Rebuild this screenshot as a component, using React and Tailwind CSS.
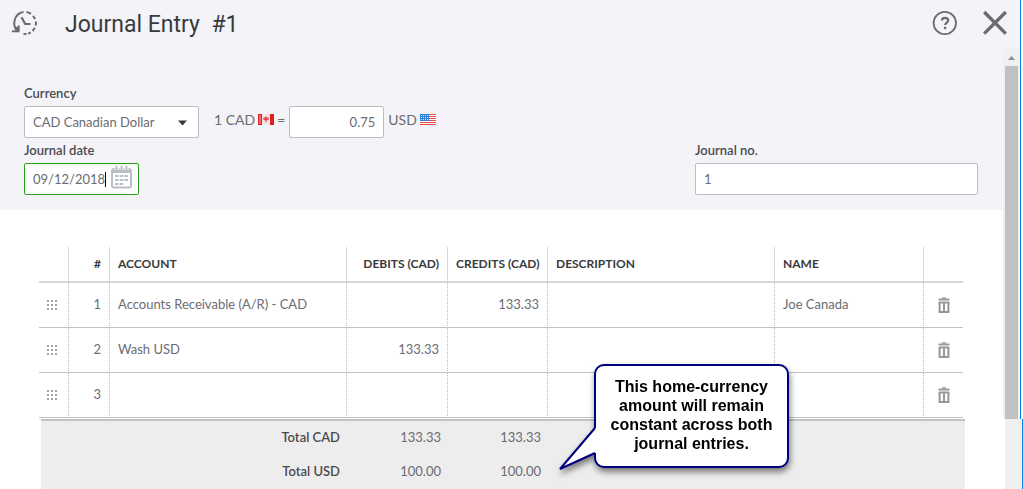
import React from "react";

const lines = [
  { id: 1, account: "Accounts Receivable (A/R) - CAD", debit: "", credit: "133.33", description: "", name: "Joe Canada" },
  { id: 2, account: "Wash USD", debit: "133.33", credit: "", description: "", name: "" },
  { id: 3, account: "", debit: "", credit: "", description: "", name: "" },
];

const totals = [
  { label: "Total CAD", debit: "133.33", credit: "133.33" },
  { label: "Total USD", debit: "100.00", credit: "100.00" },
];

function HistoryIcon() {
  return (
    <svg width="28" height="28" viewBox="0 0 28 28" fill="none" stroke="#6b6c72" strokeWidth="2">
      <path d="M12.5 3.1A11 11 0 0 0 7.5 22.6" />
      <path d="M1 22.2H7.6V16.5" />
      <path d="M3.5 19.5L7.6 22.2L7.6 17.5Z" fill="#6b6c72" strokeWidth="1" />
      <path d="M15.5 3.1A11 11 0 0 1 20 4.9M22 6.8A11 11 0 0 1 24 10.2M24.9 12.5A11 11 0 0 1 24.6 16.6M23.8 18.8A11 11 0 0 1 21.5 21.9M19.7 23.3A11 11 0 0 1 17 24.6M15.5 25H12.5" />
      <path d="M10.5 8.2L14.2 15H19.5" strokeWidth="2.2" />
    </svg>
  );
}

function HelpIcon() {
  return (
    <svg width="26" height="26" viewBox="0 0 26 26" fill="none" stroke="#6b6c72" strokeWidth="1.8">
      <circle cx="12.8" cy="13" r="11.2" />
      <path d="M9.9 10.6C9.9 8.9 11.2 7.8 13 7.8S16.2 8.9 16.2 10.4C16.2 12.5 13.1 12.6 13.1 15.1" strokeWidth="2.2" />
      <path d="M13.1 16.8V19.1" strokeWidth="2.4" />
    </svg>
  );
}

function CloseIcon() {
  return (
    <svg width="26" height="26" viewBox="0 0 26 26" fill="none" stroke="#6b6c72" strokeWidth="3.4">
      <path d="M2.2 2L23.8 23.6M23.8 2L2.2 23.6" />
    </svg>
  );
}

function CalendarIcon() {
  return (
    <svg width="21" height="24" viewBox="0 0 21 24">
      <rect x="1" y="4" width="19" height="18.5" rx="2" fill="#fff" stroke="#babec5" strokeWidth="2" />
      <path d="M1 4H20V8H1Z" fill="#babec5" />
      <path d="M5.5 1V5M10.5 1V5M15.5 1V5" stroke="#fff" strokeWidth="4" />
      <path d="M5.5 1.5V6M10.5 1.5V6M15.5 1.5V6" stroke="#babec5" strokeWidth="2" strokeLinecap="round" />
      <path d="M4 11H17M4 15H17M4 19H13" stroke="#babec5" strokeWidth="2" strokeDasharray="3.6 1.1" />
    </svg>
  );
}

function TrashIcon() {
  return (
    <svg width="12" height="17" viewBox="0 0 12 17" fill="none" stroke="#96989d">
      <path d="M.5 2.5H11.5" strokeWidth="2" />
      <path d="M4 1H8" strokeWidth="1.4" />
      <path d="M1.6 5.5V15.1H10.4V5.5" strokeWidth="2" />
      <path d="M.6 5.5H11.4" strokeWidth="2" />
      <path d="M6 6V15" strokeWidth="2" />
    </svg>
  );
}

function GripIcon() {
  return (
    <svg width="10" height="10" viewBox="0 0 10 10" fill="#a0a2a6">
      {[0, 4, 8].map((y) =>
        [0, 4, 8].map((x) => <rect key={`${x}-${y}`} x={x} y={y} width="2" height="2" />)
      )}
    </svg>
  );
}

function CanadaFlag() {
  return (
    <svg width="16" height="11" viewBox="0 0 16 11" role="img" aria-label="Canada">
      <rect width="16" height="11" fill="#f3e6e6" />
      <path d="M0 0H4V11H0ZM12 0H16V11H12Z" fill="#dd2020" />
      <path d="M1 1H3V10H1Z" fill="#f26a6a" />
      <path d="M8 2L9 3.6L11 3.8L10.4 6L8.5 6.5V8.5H7.5V6.5L5.6 6L5 3.8L7 3.6Z" fill="#ee4a4a" />
    </svg>
  );
}

function UsFlag() {
  return (
    <svg width="16" height="11" viewBox="0 0 16 11" role="img" aria-label="United States">
      <rect width="16" height="11" fill="#fff" />
      <path d="M0 .5H16M0 2.5H16M0 4.5H16M0 6.5H16M0 8.5H16M0 10.5H16" stroke="#ef4b4b" />
      <rect width="9" height="7" fill="#2f7fd8" />
      <path d="M1 1.5H8M1 3.5H8M1 5.5H8" stroke="#d6e8fa" strokeDasharray="1 1" />
    </svg>
  );
}

function ScrollTrack() {
  return (
    <div className="flex w-[17px] shrink-0 flex-col items-center bg-[#f0f0f0]" aria-hidden="true">
      <svg width="17" height="17" viewBox="0 0 17 17" className="shrink-0">
        <path d="M5 11L8.5 7L12 11Z" fill="#8f8f8f" />
      </svg>
      <div className="w-[13px] flex-1 bg-[#c1c1c1]" />
    </div>
  );
}

function Callout() {
  return (
    <div className="absolute left-[594px] top-[364px] w-[195px] drop-shadow-[1px_4px_3px_rgba(0,0,0,0.5)]">
      <div className="rounded-[10px] border-2 border-[#00007f] bg-white px-2 pb-[13px] pt-[11px] text-center font-['Liberation_Sans',sans-serif] text-base font-bold leading-[19px] text-black">
        This home-currency amount will remain constant across both journal entries.
      </div>
      <svg className="absolute -left-9 top-[62px]" width="40" height="48" viewBox="0 0 40 48">
        <path d="M39 2H37L2 43L37 27H39Z" fill="#fff" />
        <path d="M37 2L2 43L37 27" fill="none" stroke="#00007f" strokeWidth="2" />
      </svg>
    </div>
  );
}

function EntryForm() {
  return (
    <section className="bg-[#f4f4f8] pb-[15px] pl-6 pr-[25px] pt-8 text-[13px]">
      <label htmlFor="currency" className="block font-semibold leading-[25px] text-[#4a4b50]">Currency</label>
      <div className="flex">
        <div className="relative w-[175px]">
          <select id="currency" className="h-8 w-full appearance-none rounded-[2px] border border-[#babec5] bg-white px-2 pt-px text-[#6b6c72]">
            <option>CAD Canadian Dollar</option>
          </select>
          <svg className="pointer-events-none absolute right-3 top-3.5" width="9" height="6" viewBox="0 0 9 6">
            <path d="M0 .5H9L4.5 5.5Z" fill="#393a3d" />
          </svg>
        </div>
        <div className="ml-[15px] flex gap-[3px] text-sm leading-7 text-[#6b6c72]">
          <span>1 CAD</span>
          <span className="mt-2"><CanadaFlag /></span>
          <span>=</span>
          <input
            aria-label="Exchange rate"
            defaultValue="0.75"
            className="mx-px h-8 w-[95px] rounded-[2px] border border-[#babec5] bg-white px-2 text-right text-[13px]"
          />
          <span>USD</span>
          <span className="mt-2"><UsFlag /></span>
        </div>
      </div>
      <div className="flex justify-between">
        <div>
          <label htmlFor="journal-date" className="block font-semibold leading-[25px] text-[#4a4b50]">Journal date</label>
          <div className="flex h-8 w-[115px] items-center rounded-[2px] border border-[#2ca01c] bg-white pl-2 pr-1.5">
            <input id="journal-date" defaultValue="09/12/2018" className="pt-px text-[#6b6c72] outline-none [field-sizing:content]" />
            <span className="h-[15px] w-px bg-black" />
            <button aria-label="Open calendar" className="-mt-1 ml-auto"><CalendarIcon /></button>
          </div>
        </div>
        <div className="w-[283px]">
          <label htmlFor="journal-no" className="block font-semibold leading-[25px] text-[#4a4b50]">Journal no.</label>
          <input id="journal-no" defaultValue="1" className="h-8 w-full rounded-[2px] border border-[#babec5] bg-white px-2 text-[#6b6c72]" />
        </div>
      </div>
    </section>
  );
}

function LinesTable() {
  const th = "border-b-2 border-r border-[#d4d7dc] px-2 whitespace-nowrap";
  const td = "border-b border-r border-b-[#c1c1c5] border-r-[#babbc0] [border-right-style:dotted] px-2";

  return (
    <table className="w-full table-fixed border-separate border-spacing-0 text-[13px] text-[#6b6c72]">
      <colgroup>
        <col className="w-[30px]" />
        <col className="w-[41px]" />
        <col className="w-[237px]" />
        <col className="w-[101px]" />
        <col className="w-[100px]" />
        <col />
        <col className="w-[149px]" />
        <col className="w-[39px]" />
      </colgroup>
      <thead className="text-left text-xs font-bold text-[#393a3d]">
        <tr className="h-9">
          <th className={th} aria-label="Move"></th>
          <th className={`${th} text-right`}>#</th>
          <th className={th}>ACCOUNT</th>
          <th className={`${th} text-right`}>DEBITS (CAD)</th>
          <th className={th}>CREDITS (CAD)</th>
          <th className={th}>DESCRIPTION</th>
          <th className={th}>NAME</th>
          <th className="border-b-2 border-[#d4d7dc]" aria-label="Delete"></th>
        </tr>
      </thead>
      <tbody>
        {lines.map((line) => (
          <tr key={line.id} className="h-[45px]">
            <td className={td}><GripIcon /></td>
            <td className={`${td} text-right`}>{line.id}</td>
            <td className={td}>{line.account}</td>
            <td className={`${td} text-right`}>{line.debit}</td>
            <td className={`${td} text-right`}>{line.credit}</td>
            <td className={td}>{line.description}</td>
            <td className={td}>{line.name}</td>
            <td className="border-b border-[#c1c1c5]">
              <button aria-label={`Delete line ${line.id}`} className="mx-auto block"><TrashIcon /></button>
            </td>
          </tr>
        ))}
      </tbody>
    </table>
  );
}

function TotalsTable() {
  return (
    <table className="w-full table-fixed border-separate border-spacing-0 border-t-2 border-[#c1c1c5] bg-[#ededed] text-right text-[13px] text-[#6b6c72]">
      <colgroup>
        <col className="w-[307px]" />
        <col className="w-[100px]" />
        <col className="w-[100px]" />
        <col />
      </colgroup>
      <tbody>
        {totals.map((row) => (
          <tr key={row.label} className="h-[34px]">
            <th className="px-2 text-right font-semibold text-[#4a4b50]">{row.label}</th>
            <td className="px-[7px]">{row.debit}</td>
            <td className="px-[7px]">{row.credit}</td>
            <td></td>
          </tr>
        ))}
      </tbody>
    </table>
  );
}

export default function App() {
  return (
    <div className="relative flex min-h-screen flex-col overflow-hidden bg-white font-[Lato,sans-serif] text-[#393a3d]">
      <div className="mr-0.5 border-r border-[#0f80e0]">
        <header className="flex h-[49px] items-center bg-[#f4f4f8] pb-[3px] pl-[11px] pr-3">
          <button aria-label="Recent entries"><HistoryIcon /></button>
          <h1 className="ml-[26px] pt-1 font-[Roboto,sans-serif] text-[23px]">Journal Entry&nbsp; #1</h1>
          <button aria-label="Help" className="ml-auto"><HelpIcon /></button>
          <button aria-label="Close" className="ml-6"><CloseIcon /></button>
        </header>
        <div className="flex">
          <main className="min-w-0 flex-1">
            <EntryForm />
            <div className="mt-[37px] pb-px pl-[39px] pr-10">
              <LinesTable />
            </div>
          </main>
          <ScrollTrack />
        </div>
      </div>
      <footer className="flex flex-1 border-r border-[#0f80e0]">
        <div className="flex-1 pl-[41px] pr-10">
          <TotalsTable />
        </div>
        <div className="w-[17px] bg-[#f0f0f0]" />
      </footer>
      <Callout />
    </div>
  );
}
